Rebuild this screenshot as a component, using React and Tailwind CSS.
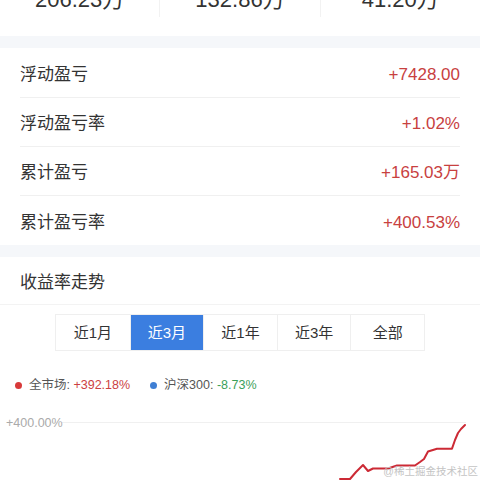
import React, { useState } from 'react';

const font = { fontFamily: '"Liberation Sans", "Noto Sans CJK SC", sans-serif' };

const summary = ['206.23万', '132.86万', '41.20万'];

const rows = [
  { label: '浮动盈亏', value: '+7428.00', h: 'h-[50px] border-b' },
  { label: '浮动盈亏率', value: '+1.02%', h: 'h-[49px] border-b' },
  { label: '累计盈亏', value: '+165.03万', h: 'h-[49px] border-b' },
  { label: '累计盈亏率', value: '+400.53%', h: 'h-[49px]' },
];

const ranges = ['近1月', '近3月', '近1年', '近3年', '全部'];

// points of the red curve, in chart coordinates
const curve = [
  [340, 84], [350, 84], [356, 77], [363, 70], [368, 76], [373, 73.5], [388, 73.5],
  [397, 70.5], [415, 70.5], [420, 67], [424, 64], [428, 56.5], [437, 53.7], [452, 53.7],
  [455, 45], [458, 38], [461, 34], [465, 30],
];

const App = () => {
  const [range, setRange] = useState('近3月');

  return (
    <div className="w-[480px] h-[480px] overflow-hidden bg-white text-[#333]" style={font}>
      {/* totals row, cut off at the top */}
      <div className="flex h-[36px]">
        {summary.map((s, i) => (
          <div key={s} className={`flex-1 flex flex-col h-[17px] ${i < 2 ? 'border-r border-[#f2f2f2]' : ''}`}>
            <div className="-mt-[11px] text-center text-[22px] leading-[22px] text-[#333]">{s}</div>
          </div>
        ))}
      </div>

      <div className="h-[12px] bg-[#f5f7fa]" />

      <div className="px-5">
        {rows.map((r) => (
          <div key={r.label} className={`flex items-center justify-between pt-[4px] border-[#f0f0f0] ${r.h}`}>
            <span className="text-[17px]">{r.label}</span>
            <span className="text-[17px] text-[#c8413f]">{r.value}</span>
          </div>
        ))}
      </div>

      <div className="h-[12px] bg-[#f5f7fa]" />

      <div className="h-[48px] flex items-center pt-[4px] px-5 border-b border-[#f3f3f3]">
        <span className="text-[17px]">收益率走势</span>
      </div>

      <div className="pt-[9px] flex justify-center">
        <div className="grid grid-cols-5 w-[370px] h-[37px] border border-[#efefef]">
          {ranges.map((r, i) => (
            <button
              key={r}
              onClick={() => setRange(r)}
              className={`flex items-center justify-center pt-px text-[15px] ${i > 0 ? 'border-l border-[#efefef]' : ''} ${
                range === r ? 'bg-[#3b7ee0] text-white' : 'text-[#333]'
              }`}
            >
              {r}
            </button>
          ))}
        </div>
      </div>

      <div className="mt-[24px] h-[20px] flex items-center pl-[15px] text-[12.5px] text-[#555]">
        <span className="w-[7px] h-[7px] rounded-full bg-[#d83a3a] mr-[7px]" />
        <span>
          全市场:&nbsp;<span className="text-[#cc3f43]">+392.18%</span>
        </span>
        <span className="w-[7px] h-[7px] rounded-full bg-[#3f7fd4] ml-[20px] mr-[7px]" />
        <span>
          沪深300:&nbsp;<span className="text-[#3aa05a]">-8.73%</span>
        </span>
      </div>

      <div className="relative h-[85px]">
        <svg className="absolute inset-0" width="480" height="86" viewBox="0 0 480 86">
          <line x1="62" y1="27.5" x2="466" y2="27.5" stroke="#f0f0f0" strokeWidth="1" />
          <polyline
            points={curve.map((p) => p.join(',')).join(' ')}
            fill="none"
            stroke="#cc2a35"
            strokeWidth="2"
            strokeLinejoin="round"
            strokeLinecap="round"
          />
        </svg>
        <div className="relative pt-[20px] pl-[6px] text-[12.5px] leading-[16px] text-[#aaa]">+400.00%</div>
        <div className="absolute right-[2px] bottom-[2px] text-[10.5px] leading-[14px] text-[#c4c4c4]">@稀土掘金技术社区</div>
      </div>
    </div>
  );
};

export default App;
